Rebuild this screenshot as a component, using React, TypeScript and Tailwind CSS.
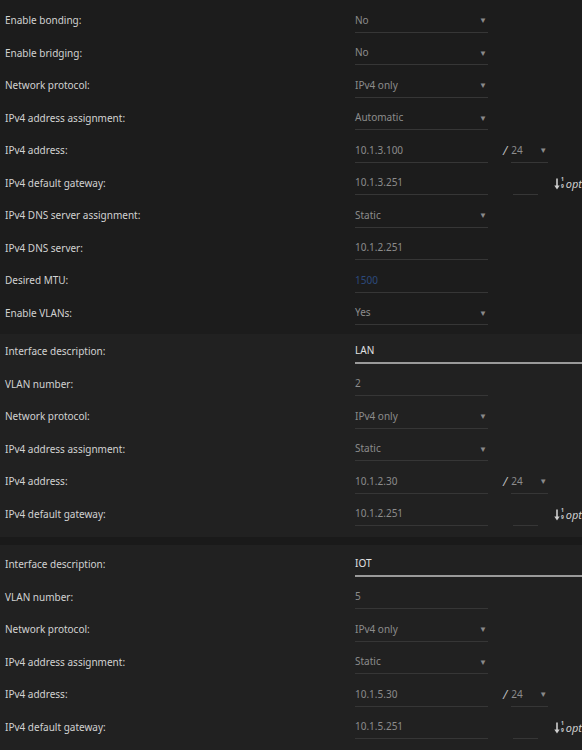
import React from "react";

type Row =
  | { kind: "select"; label: string; value: string }
  | { kind: "text"; label: string; value: string; blue?: boolean }
  | { kind: "ip"; label: string; value: string; mask: string }
  | { kind: "gw"; label: string; value: string }
  | { kind: "desc"; label: string; value: string };

const Arrow = () => (
  <span className="text-[8px] leading-none text-[#8a8a8a]">▼</span>
);

const Field = ({ value, select, blue }: { value: string; select?: boolean; blue?: boolean }) => (
  <div className="flex h-[24px] w-[133px] items-center justify-between border-b border-[#363636] pr-[1px]">
    <span className={blue ? "text-[#2c4a7c]" : "text-[#8c8c8c]"}>{value}</span>
    {select && <Arrow />}
  </div>
);

const OptIcon = () => (
  <div className="ml-[16px] flex items-center text-[#cfcfcf]">
    <svg width="6" height="12" viewBox="0 0 6 12" className="mt-[1px]">
      <path d="M3 0.5 V10" stroke="#cfcfcf" strokeWidth="1.6" fill="none" />
      <path d="M0.3 7.5 L3 11.5 L5.7 7.5 Z" fill="#cfcfcf" />
    </svg>
    <div className="ml-[1px] flex h-[12px] flex-col justify-between text-[5px] leading-[5px] font-bold">
      <span className="block h-[5px]">1</span>
      <span className="block h-[5px]">9</span>
    </div>
    <span className="ml-[2px] text-[11px] leading-none italic">opt</span>
  </div>
);

function RowView({ row }: { row: Row }) {
  return (
    <div className="flex h-[32.5px] items-center">
      <div className="w-[355px] shrink-0 pl-[5px] text-[#d2d2d2]">{row.label}</div>
      {row.kind === "select" && <Field value={row.value} select />}
      {row.kind === "text" && <Field value={row.value} blue={row.blue} />}
      {row.kind === "ip" && (
        <>
          <Field value={row.value} />
          <span className="ml-[15px] text-[12px] italic text-[#bdbdbd]">/</span>
          <div className="ml-[4px] flex h-[24px] w-[37px] items-center justify-between border-b border-[#363636] pr-[1px]">
            <span className="text-[#8c8c8c]">{row.mask}</span>
            <Arrow />
          </div>
        </>
      )}
      {row.kind === "gw" && (
        <>
          <Field value={row.value} />
          <div className="ml-[25px] h-[24px] w-[25px] border-b border-[#363636]" />
          <OptIcon />
        </>
      )}
      {row.kind === "desc" && (
        <div className="flex h-[24px] flex-1 items-center border-b-2 border-[#9a9a9a]">
          <span className="text-[#e2e2e2]">{row.value}</span>
        </div>
      )}
    </div>
  );
}

const section1: Row[] = [
  { kind: "select", label: "Enable bonding:", value: "No" },
  { kind: "select", label: "Enable bridging:", value: "No" },
  { kind: "select", label: "Network protocol:", value: "IPv4 only" },
  { kind: "select", label: "IPv4 address assignment:", value: "Automatic" },
  { kind: "ip", label: "IPv4 address:", value: "10.1.3.100", mask: "24" },
  { kind: "gw", label: "IPv4 default gateway:", value: "10.1.3.251" },
  { kind: "select", label: "IPv4 DNS server assignment:", value: "Static" },
  { kind: "text", label: "IPv4 DNS server:", value: "10.1.2.251" },
  { kind: "text", label: "Desired MTU:", value: "1500", blue: true },
  { kind: "select", label: "Enable VLANs:", value: "Yes" },
];

const vlan = (name: string, num: string, net: string): Row[] => [
  { kind: "desc", label: "Interface description:", value: name },
  { kind: "text", label: "VLAN number:", value: num },
  { kind: "select", label: "Network protocol:", value: "IPv4 only" },
  { kind: "select", label: "IPv4 address assignment:", value: "Static" },
  { kind: "ip", label: "IPv4 address:", value: `10.1.${net}.30`, mask: "24" },
  { kind: "gw", label: "IPv4 default gateway:", value: `10.1.${net}.251` },
];

export default function App() {
  return (
    <div
      className="h-[750px] w-[582px] overflow-hidden bg-[#212121] text-[10px]"
      style={{ fontFamily: '"Noto Sans", "Open Sans", sans-serif' }}
    >
      <div className="bg-[#1c1c1c] pt-[4.5px] pb-[4.5px]">
        {section1.map((r, i) => (
          <RowView key={i} row={r} />
        ))}
      </div>
      <div className="bg-[#212121] pt-[1.5px] pb-[6.5px]">
        {vlan("LAN", "2", "2").map((r, i) => (
          <RowView key={i} row={r} />
        ))}
      </div>
      <div className="h-[8px] bg-[#1a1a1a]" />
      <div className="bg-[#212121] pt-[3.5px]">
        {vlan("IOT", "5", "5").map((r, i) => (
          <RowView key={i} row={r} />
        ))}
      </div>
    </div>
  );
}
